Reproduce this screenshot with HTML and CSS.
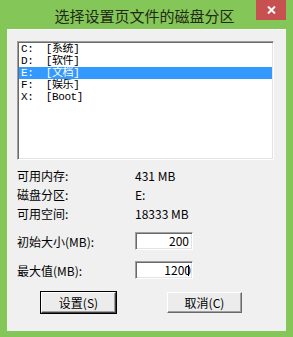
FILE: index.html
```html
<!DOCTYPE html>
<html lang="zh-CN">

<head>
    <meta charset="UTF-8">
    <title>选择设置页文件的磁盘分区</title>
    <link rel="stylesheet" href="styles.css">
</head>

<body>
    <div class="window">
        <!-- Title bar -->
        <div class="titlebar">
            <span class="title">选择设置页文件的磁盘分区</span>
            <div class="close">
                <svg width="9" height="8" viewBox="0 0 9 8">
                    <path d="M1 0.5 L8 7.5 M8 0.5 L1 7.5" stroke="#fff" stroke-width="2" fill="none"/>
                </svg>
            </div>
        </div>

        <div class="client">
            <!-- Drive list -->
            <div class="listbox">
                <div class="item">C:  [系统]</div>
                <div class="item">D:  [软件]</div>
                <div class="item selected">E:  [文档]</div>
                <div class="item">F:  [娱乐]</div>
                <div class="item">X:  [Boot]</div>
            </div>

            <!-- Info -->
            <div class="info">
                <span>可用内存:</span><span>431 MB</span>
                <span>磁盘分区:</span><span>E:</span>
                <span>可用空间:</span><span>18333 MB</span>
            </div>

            <!-- Size fields -->
            <div class="fields">
                <label for="initSize">初始大小(MB):</label>
                <div class="field" id="initSize">200</div>
                <label for="maxSize">最大值(MB):</label>
                <div class="field" id="maxSize">1200<span class="caret"></span></div>
            </div>

            <div class="buttons">
                <button class="default">设置(S)</button>
                <button>取消(C)</button>
            </div>
        </div>
    </div>
</body>

</html>
```

FILE: styles.css
```css
/* Windows 8 style dialog */
body {
    margin: 0;
    font-family: "Noto Sans CJK SC", sans-serif;
    font-size: 12px;
    color: #000;
}

.window {
    width: 293px;
    height: 337px;
    background-color: #84c657;
    display: flex;
    flex-direction: column;
}

.titlebar {
    position: relative;
    height: 29px;
    display: flex;
    align-items: center;
    justify-content: center;
}

.title {
    font-size: 15px;
    color: #1f2a17;
    margin-left: -4px;
    margin-top: 1px;
}

.close {
    position: absolute;
    top: 0;
    right: 7px;
    width: 30px;
    height: 20px;
    background-color: #c75050;
    display: flex;
    align-items: center;
    justify-content: center;
}

.client {
    margin: 0 7px;
    height: 302px;
    box-sizing: border-box;
    background-color: #f0f0f0;
    border-top: 1px solid #f8f8f8;
    padding: 11px 0 0 10px;
}

.listbox {
    width: 257px;
    height: 119px;
    box-sizing: border-box;
    background-color: #fff;
    border: 1px solid;
    border-color: #a0a0a0 #ffffff #ffffff #a0a0a0;
    box-shadow: inset 1px 1px 0 #696969, inset -1px -1px 0 #e3e3e3;
    padding: 1px;
    font-family: "Liberation Mono", "Noto Sans CJK SC", monospace;
    font-size: 11px;
    letter-spacing: -0.4px;
}

.item {
    height: 12px;
    line-height: 12px;
    padding-left: 2px;
    white-space: pre;
    overflow: hidden;
}

.item.selected {
    background-color: #3399ff;
    color: #fff;
}

.info {
    display: grid;
    grid-template-columns: 118px auto;
    grid-auto-rows: 19px;
    align-items: center;
    margin-top: 6px;
}

.fields {
    display: grid;
    grid-template-columns: 118px 58px;
    grid-auto-rows: 18px;
    row-gap: 11px;
    align-items: center;
    margin-top: 9px;
}

.field {
    height: 18px;
    box-sizing: border-box;
    background-color: #fff;
    border: 1px solid;
    border-color: #a0a0a0 #ffffff #ffffff #a0a0a0;
    box-shadow: inset 1px 1px 0 #696969, inset -1px -1px 0 #e3e3e3;
    text-align: right;
    padding-right: 3px;
    line-height: 15px;
    white-space: nowrap;
}

.caret {
    display: inline-block;
    width: 0;
    height: 11px;
    margin-left: -3px;
    border-left: 1px solid #000;
    vertical-align: -1px;
}

.buttons {
    display: flex;
    gap: 51px;
    margin-top: 13px;
    margin-left: 24px;
}

button {
    width: 75px;
    height: 21px;
    padding: 0;
    font-family: "Noto Sans CJK SC", sans-serif;
    font-size: 12px;
    background-color: #ececec;
    border: 1px solid;
    border-color: #ffffff #696969 #696969 #ffffff;
    box-shadow: inset -1px -1px 0 #a0a0a0;
}

button.default {
    outline: 1px solid #000;
    outline-offset: 0;
    border-color: #ffffff #404040 #404040 #ffffff;
}
```
